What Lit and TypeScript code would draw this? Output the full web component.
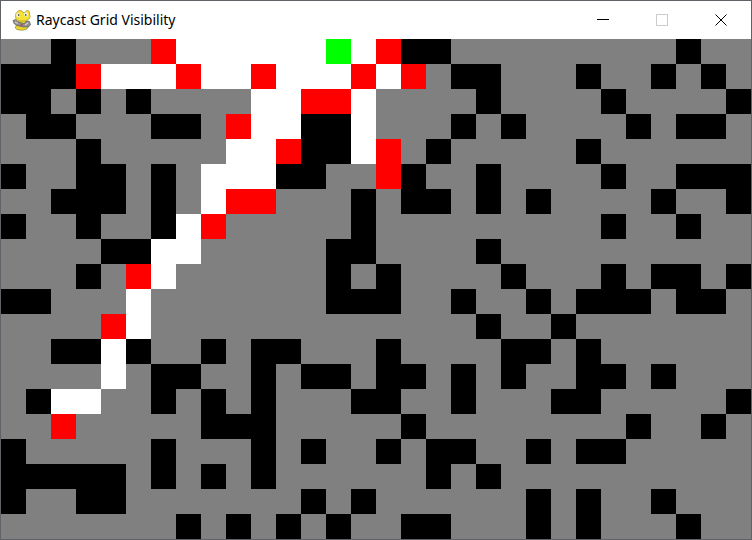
import { LitElement, html, css } from "lit";
import { customElement, property, state } from "lit/decorators.js";
import { classMap } from "lit/directives/class-map.js";

// Legend: "." hidden, "#" wall, "_" visible floor, "R" visible wall, "G" viewer
const MAP = [
  "..#...R______G_R##.........#..",
  "###R___R__R___R_R.##...#..#.#.",
  "##.#.#....__RR_....#....#....#",
  ".##...##.R__##_...#.#....#.##.",
  "...#....._" + "_R##_R.#.." + "...#......",
  "#..##.#.__" + "_##..R#..#" + "....#..###",
  "..###.#._R" + "R...#.##.#" + ".#....#..#",
  "#..#..#_R." + "....#....." + "....#..#..",
  "....##__.." + "...##....#" + "..........",
  "...#.R_..." + "...#.#...." + "#...#.##.#",
  "##..._...." + "...###..#." + ".#.###.##.",
  "....R_...." + ".........#" + "..#.......",
  "..##_#..#." + "##...#...." + "##.#......",
  "...._.##.." + "#.##.##.#." + "#..##.#...",
  ".#__..#.#." + "#...##..#." + "..##.....#",
  "..R.....##" + "#.....#..." + ".....#..#.",
  "#.....#..." + "#.#..#.##." + ".#.##.....",
  "#####.#.#." + "#......#.#" + "..........",
  "#..##....." + "..#.#....." + ".#.#..#...",
  ".......#.#" + ".#.#..##.." + ".#.#...#..",
];

@customElement("title-bar")
class TitleBar extends LitElement {
  @property() caption = "";

  static styles = css`
    :host {
      display: flex;
      align-items: center;
      height: 38px;
      background: #fff;
      color: #000;
    }
    .logo {
      display: block;
      width: 20px;
      height: 22px;
      margin-left: 11px;
      flex: none;
    }
    h1 {
      flex: 1;
      min-width: 0;
      margin: 0 0 0 4px;
      font: 400 14px/20px "Noto Sans", "Open Sans", sans-serif;
      white-space: nowrap;
      overflow: hidden;
      text-overflow: ellipsis;
    }
    .controls {
      display: flex;
      align-self: stretch;
      margin-right: 1px;
    }
    button {
      display: flex;
      align-items: center;
      justify-content: center;
      width: 59px;
      padding: 0;
      border: 0;
      background: none;
      color: #000;
    }
    button:disabled {
      color: #ccc;
    }
    button svg {
      display: block;
      width: 12px;
      height: 12px;
      fill: none;
      stroke: currentColor;
    }
  `;

  render() {
    return html`
      <svg class="logo" viewBox="0 0 20 22" aria-hidden="true">
        <path d="M4 17 Q2 19 5 20.5 Q10 22 14 20.5 Q17 19 16 16 L14 11 L7 11Z" fill="#ecd92f" stroke="#8a7c2a" stroke-width=".7" />
        <path d="M6 2 Q8 .5 10 2 L11 3.5 L13 3.5 Q14 1 16 1.5 Q18 2 17.5 5 Q19 8 17 10 Q14 13 8 12 Q3 11 3.5 8 Q3 4 6 2Z" fill="#f5e233" stroke="#a3952f" stroke-width=".7" />
        <ellipse cx="6.2" cy="6" rx="2" ry="2.3" fill="#f0f0e6" />
        <ellipse cx="14" cy="5.5" rx="1.9" ry="2.3" fill="#f0f0e6" />
        <path d="M6 5h1.4v2H6zM13 5h1.4v2H13z" fill="#666" />
        <path d="M1 11.5L3.5 10.5L6 13L12 14.5L15 12L17.5 12.5L18.5 16L16 18L11 18L5 16.5L2 14.5Z" fill="#8f8f8f" stroke="#5c5c5c" stroke-width=".7" />
        <path d="M3 13l3 1.5M13 16l3-2" stroke="#d4d4d4" stroke-width="1.1" />
        <path d="M8.5 15h2.5v1.8H8.5z" fill="#a95a58" />
      </svg>
      <h1>${this.caption}</h1>
      <div class="controls">
        <button type="button" aria-label="Minimize">
          <svg viewBox="0 0 12 12"><path d="M0 5.5H12" /></svg>
        </button>
        <button type="button" aria-label="Maximize" disabled>
          <svg viewBox="0 0 12 12"><rect x=".5" y=".5" width="11" height="11" /></svg>
        </button>
        <button type="button" aria-label="Close">
          <svg viewBox="0 0 12 12"><path d="M.5 .5L11.5 11.5M11.5 .5L.5 11.5" /></svg>
        </button>
      </div>
    `;
  }
}

@customElement("visibility-grid")
class VisibilityGrid extends LitElement {
  @property({ attribute: false }) rows: string[] = [];

  static styles = css`
    :host {
      display: block;
    }
    .board {
      display: grid;
      grid-template-columns: repeat(30, minmax(0, 1fr));
      background: #808080;
    }
    .cell {
      aspect-ratio: 1;
    }
    .wall {
      background: #000;
    }
    .lit {
      background: #fff;
    }
    .hit {
      background: #f00;
    }
    .viewer {
      background: #0f0;
    }
  `;

  render() {
    return html`
      <div class="board" role="img" aria-label="Visibility grid">
        ${this.rows.map((row) =>
          [...row].map(
            (c) => html`<div
              class=${classMap({
                cell: true,
                wall: c === "#",
                lit: c === "_",
                hit: c === "R",
                viewer: c === "G",
              })}
            ></div>`
          )
        )}
      </div>
    `;
  }
}

@customElement("app-root")
class AppRoot extends LitElement {
  @state() rows = MAP;

  static styles = css`
    :host {
      display: block;
      box-sizing: border-box;
      border: 1px solid #5f6368;
      background: #808080;
    }
  `;

  render() {
    return html`
      <title-bar caption="Raycast Grid Visibility"></title-bar>
      <visibility-grid .rows=${this.rows}></visibility-grid>
    `;
  }
}
